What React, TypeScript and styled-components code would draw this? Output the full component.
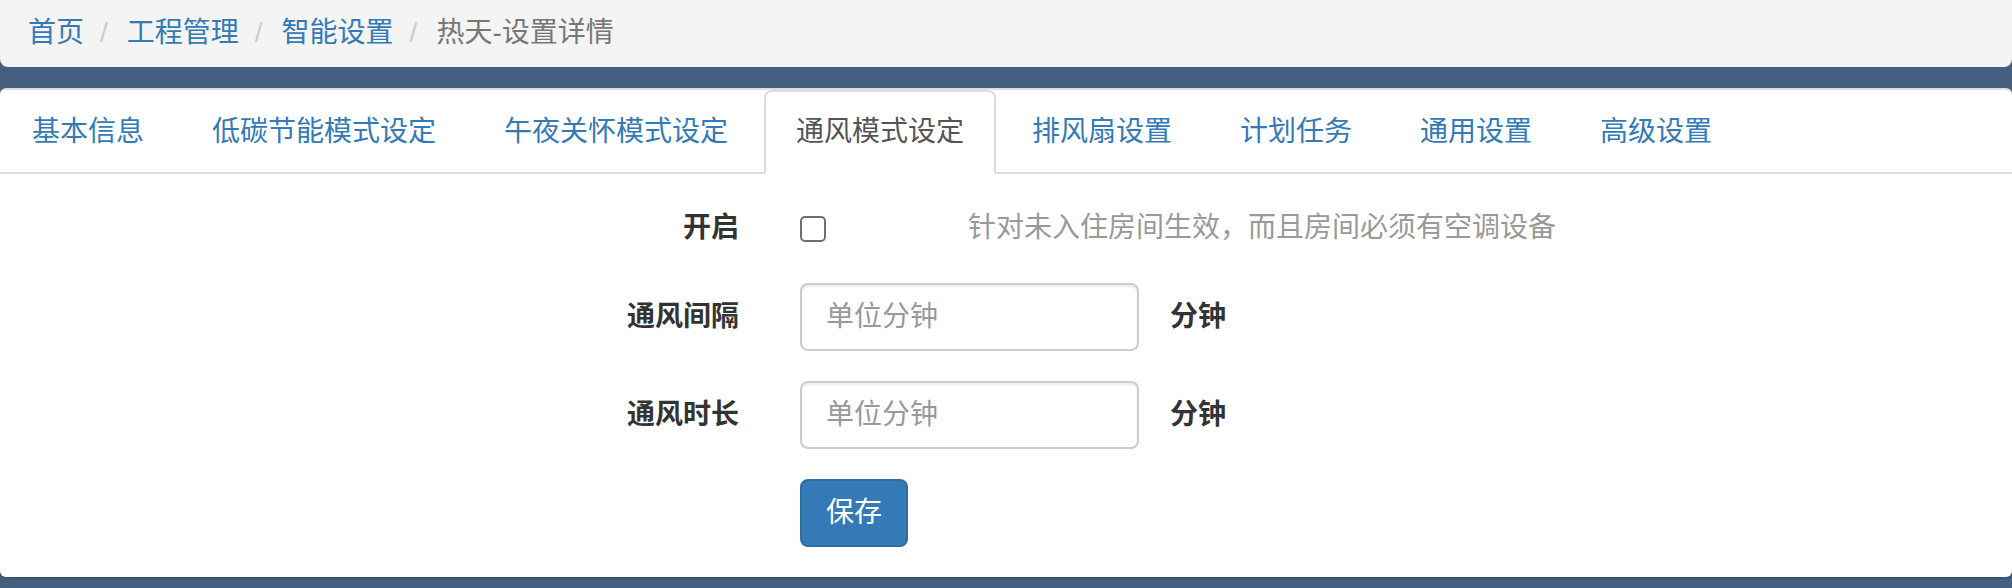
import React from 'react';
import styled, {createGlobalStyle} from 'styled-components';

const GlobalStyle = createGlobalStyle`
  html, body {
    margin: 0;
    padding: 0;
    background-color: #455f80;
  }
  body {
    font-family: "Liberation Sans", "Noto Sans CJK SC", sans-serif;
    font-size: 28px;
    line-height: 40px;
    color: #333;
  }
  * {
    box-sizing: border-box;
  }
`

const Page = styled.div`
  width: 2012px;
  min-height: 588px;
  padding-bottom: 9px;
`

const Breadcrumb = styled.ol`
  display: flex;
  align-items: flex-start;
  list-style: none;
  margin: 0 0 21px;
  padding: 13px 28px 0;
  height: 67px;
  background-color: #f4f4f4;
  border-radius: 0 0 8px 8px;
`

const Crumb = styled.li<{ $active?: boolean }>`
  color: ${p => p.$active ? '#777' : '#337ab7'};
  white-space: nowrap;
`

const Separator = styled.span`
  color: #ccc;
  padding: 0 19px 0 16px;
`

const Panel = styled.div`
  display: flow-root;
  background-color: #fff;
  border-top: 2px solid #ddd;
  border-radius: 6px;
  box-shadow: 0 2px 1px rgba(0, 0, 0, 0.12);
`

const Tabs = styled.ul`
  display: flex;
  list-style: none;
  margin: 0;
  padding: 0;
  border-bottom: 2px solid #ddd;
`

const Tab = styled.li<{ $active?: boolean }>`
  margin: 0 4px -2px 0;
  padding: 20px 30px;
  border: 2px solid transparent;
  border-radius: 8px 8px 0 0;
  white-space: nowrap;
  cursor: pointer;
  color: #337ab7;
  ${p => p.$active && `
    color: #555;
    background-color: #fff;
    border-color: #ddd;
    border-bottom-color: #fff;
  `}
`

const TabContent = styled.div`
  display: flow-root;
  padding: 20px 20px 0;
`

const FormGroup = styled.div<{ $minHeight?: number }>`
  display: grid;
  grid-template-columns: 719px auto;
  column-gap: 61px;
  align-items: start;
  margin-bottom: 30px;
  min-height: ${p => p.$minHeight ? `${p.$minHeight}px` : 'auto'};
`

const Label = styled.label`
  padding-top: 14px;
  text-align: right;
  font-weight: bold;
`

const Control = styled.div`
  display: flex;
  align-items: center;
`

const CheckControl = styled.div`
  display: flex;
  align-items: flex-start;
`

const Checkbox = styled.input.attrs({type: 'checkbox'})`
  appearance: none;
  margin: 22px 0 0;
  width: 26px;
  height: 26px;
  border: 2px solid #6f6f6f;
  border-radius: 5px;
  background-color: #fff;
`

const Hint = styled.span`
  padding-top: 14px;
  margin-left: 142px;
  color: #999;
  white-space: nowrap;
`

const Input = styled.input`
  width: 339px;
  height: 68px;
  padding: 12px 24px;
  font-family: inherit;
  font-size: 28px;
  line-height: 40px;
  color: #555;
  border: 2px solid #ccc;
  border-radius: 8px;
  box-shadow: inset 0 2px 2px rgba(0, 0, 0, 0.075);
  outline: none;
  &::placeholder {
    color: #999;
  }
`

const Unit = styled.span`
  margin-left: 31px;
  font-weight: bold;
`

const Button = styled.button`
  height: 68px;
  padding: 12px 24px;
  font-family: inherit;
  font-size: 28px;
  line-height: 40px;
  color: #fff;
  background-color: #337ab7;
  border: 2px solid #2e6da4;
  border-radius: 8px;
  cursor: pointer;
`

const crumbs = ['首页', '工程管理', '智能设置']
const tabs = ['基本信息', '低碳节能模式设定', '午夜关怀模式设定', '通风模式设定', '排风扇设置', '计划任务', '通用设置', '高级设置']

const App: React.FC = () => {
    return (
        <Page>
            <GlobalStyle/>
            <Breadcrumb>
                {crumbs.map(c => (
                    <Crumb key={c}>{c}<Separator>/</Separator></Crumb>
                ))}
                <Crumb $active>热天-设置详情</Crumb>
            </Breadcrumb>
            <Panel>
                <Tabs>
                    {tabs.map(t => <Tab key={t} $active={t === '通风模式设定'}>{t}</Tab>)}
                </Tabs>
                <TabContent>
                    <FormGroup $minHeight={59}>
                        <Label>开启</Label>
                        <CheckControl>
                            <Checkbox/>
                            <Hint>针对未入住房间生效，而且房间必须有空调设备</Hint>
                        </CheckControl>
                    </FormGroup>
                    <FormGroup>
                        <Label>通风间隔</Label>
                        <Control>
                            <Input placeholder="单位分钟"/>
                            <Unit>分钟</Unit>
                        </Control>
                    </FormGroup>
                    <FormGroup>
                        <Label>通风时长</Label>
                        <Control>
                            <Input placeholder="单位分钟"/>
                            <Unit>分钟</Unit>
                        </Control>
                    </FormGroup>
                    <FormGroup>
                        <span/>
                        <Control>
                            <Button>保存</Button>
                        </Control>
                    </FormGroup>
                </TabContent>
            </Panel>
        </Page>
    );
};

export default App;
